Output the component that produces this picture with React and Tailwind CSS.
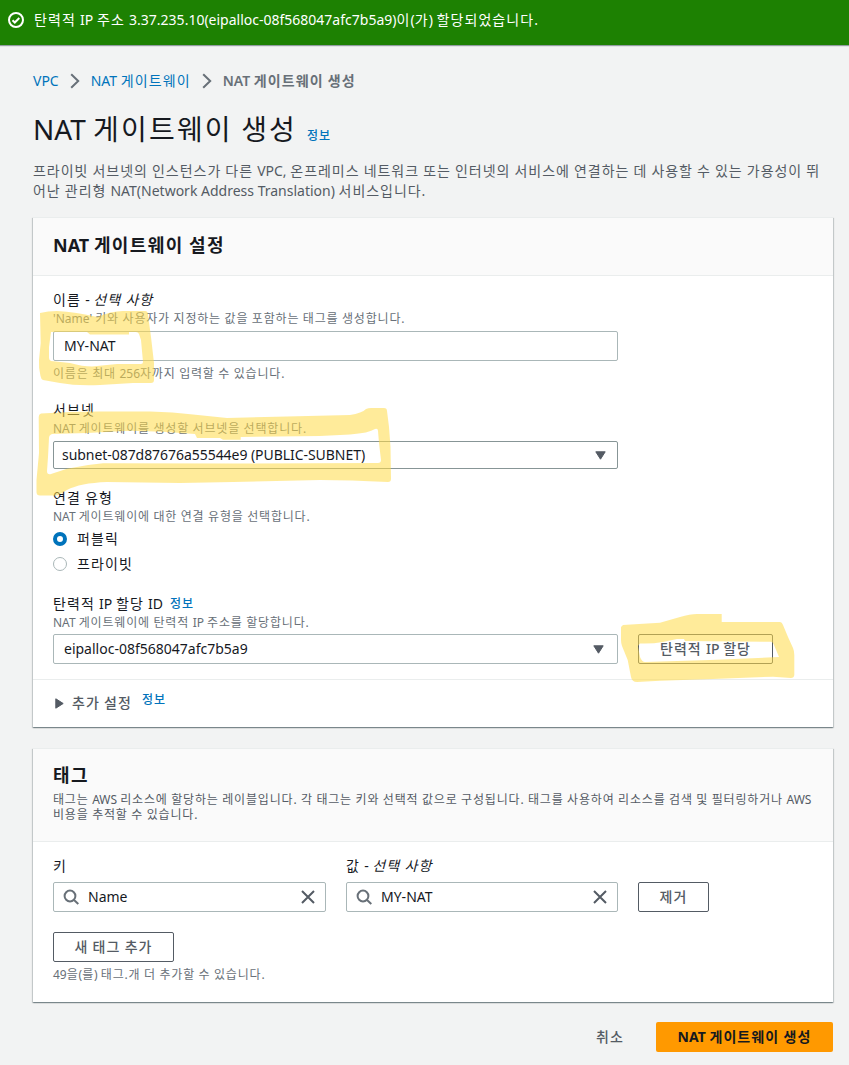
import React from "react";

const HANGUL = /([\uac00-\ud7a3]+(?:[ .,]+[\uac00-\ud7a3]*)*)/;

/* Hangul runs are set slightly wider than the Latin runs beside them. */
function T({ children, dense }) {
  const spacing = dense ? "tracking-[0.069em] [word-spacing:-0.035em]" : "tracking-[0.078em] [word-spacing:-0.04em]";
  return children.split(HANGUL).map((part, i) =>
    i % 2 ? (
      <span key={i} className={spacing}>{part}</span>
    ) : (
      <span key={i}>{part}</span>
    )
  );
}

function Chevron() {
  return (
    <svg className="mx-[11px] h-4 w-[10px] shrink-0" viewBox="0 0 10 16" fill="none" stroke="#687078" strokeWidth="2">
      <path d="M1.2 1.2 8.2 8l-7 6.8" />
    </svg>
  );
}

function Caret() {
  return (
    <svg className="h-[9px] w-[11px] shrink-0" viewBox="0 0 11 9">
      <path d="M.8.8h9.400L5.500 8.200z" fill="#545b64" stroke="#545b64" strokeLinejoin="round" />
    </svg>
  );
}

function Search() {
  return (
    <svg className="h-4 w-4 shrink-0" viewBox="0 0 16 16" fill="none" stroke="#687078" strokeWidth="2">
      <circle cx="7" cy="7" r="5.400" />
      <path d="m11 11 4.300 4" />
    </svg>
  );
}

function Close() {
  return (
    <svg className="h-[14px] w-[14px] shrink-0" viewBox="0 0 14 14" fill="none" stroke="#545b64" strokeWidth="2">
      <path d="m1 1 12 12M13 1 1 13" />
    </svg>
  );
}

function Info({ className = "" }) {
  return <a className={"text-[12px] font-medium text-[#0073bb] " + className}><T>정보</T></a>;
}

function Label({ children, optional }) {
  return (
    <div className="flex h-5 items-center whitespace-pre text-[14px] leading-5 text-[#16191f]">
      <span><T>{children}</T>{optional && <i><T>선택 사항</T></i>}</span>
    </div>
  );
}

function Hint({ children }) {
  return <p className="h-[17px] whitespace-nowrap pt-px text-[12px] leading-4 text-[#687078]"><T dense>{children}</T></p>;
}

function Button({ children, className = "" }) {
  return (
    <button className={"flex h-[30px] items-center justify-center rounded-[2px] border border-[#545b64] bg-white text-[14px] font-medium leading-5 text-[#545b64] " + className}>
      <span><T>{children}</T></span>
    </button>
  );
}

function TagField({ label, optional, value, className }) {
  return (
    <div className={className}>
      <Label optional={optional}>{label}</Label>
      <div className="mt-[6px] flex h-[30px] items-center rounded-[2px] border border-[#aab7b8] bg-white pl-[9px] pr-[10px]">
        <Search />
        <span className="ml-[9px] flex-1 text-[14px] leading-5 text-[#16191f]"><T>{value}</T></span>
        <Close />
      </div>
    </div>
  );
}

const CARD = "border-t border-t-[#eaeded] bg-white shadow-[0_1px_1px_0_rgba(0,28,36,0.3),1px_1px_1px_0_rgba(0,28,36,0.15),-1px_1px_1px_0_rgba(0,28,36,0.15)]";

function Highlights() {
  return (
    <svg className="pointer-events-none absolute left-0 top-0" width="849" height="1065" viewBox="0 0 849 1065" fill="#ffda47" fillOpacity="0.55" fillRule="evenodd">
      <path d="M40 313Q48 311 57 311Q76 312 97 317Q111 311 123 311H145Q148 311 148 315L151 337L154 363V380Q154 383 151 383H133L100 385Q84 385.500 73 384.700L60 383L43 380Q41 379 40.500 376Q38.500 367 39 360L40.700 343ZM51 332H87L90 334.500H129V332H136Q138 332 139 334L141 340L143 362Q143 364 141 364H117L92 366.500Q83 366.500 70 363L51 361Q49 360 49 358V347Z" />
      <path d="M41 413.500Q70 411.500 100 411.500H150Q173 412 193 414.500L227 418L287 416.500L350 415Q362 413 366 409Q369 407.500 373 408H384Q387 408 387 411L389 427L390.500 447L391 479Q391 482 388 482Q350 480 320 480L233 482L180 483L107 482Q80 483 67 490L60 494Q58 495.500 55 495.500H40Q36.500 495.500 36.500 492V480L39 453L38.700 417Q38.700 414 41 413.500ZM52 434L87 433L130 430.700Q163 431 195 434L197 438H220L223 439.700H240.700V437L320 436L350 434.500Q369 433 375 429Q378 428 378 431L379 443L381 460Q381 463 378 463L233 463.500L103 463.300Q84 465 67 468.700L51 474Q47 475 47 471L48 457L49 438Q49 435 52 434Z" />
      <path d="M623 625L639 624L660 622.700L680 617Q690 614 697 614H721.700V622H780Q782 622 783 625L788 637L793 648Q794.300 651 794.300 655V675Q794 678 791 678L773 676.700L713 679L660 680.700L637 682Q632 682 631 677L627.700 660L622 646Q621 643 621 640V627ZM640 643.500Q652 644 663 642L677 639H684L685 641L771 641.700Q773 642 774 645L779 657L740 658.700L710 660L645 662Q642 662 640 657L638 646Z" />
    </svg>
  );
}

export default function App() {
  return (
    <div className="relative h-[1065px] w-[849px] overflow-hidden bg-[#f2f3f3] font-['Noto_Sans','Noto_Sans_CJK_KR',sans-serif]">
      <header className="flex h-[45px] items-start bg-[#1d8102] pl-2 pt-[10px] text-white shadow-[0_1px_1px_rgba(0,28,36,0.4)]">
        <svg className="mt-[2px] h-4 w-4 shrink-0" viewBox="0 0 16 16" fill="none" stroke="currentColor" strokeWidth="2">
          <circle cx="8" cy="8" r="7" />
          <path d="m4.500 8.200 2.300 2.300 4.500-4.500" />
        </svg>
        <p className="ml-[10px] whitespace-nowrap text-[14px] leading-5"><T>탄력적 IP 주소 3.37.235.10(eipalloc-08f568047afc7b5a9)이(가) 할당되었습니다.</T></p>
      </header>

      <main className="pl-[33px] pr-4">
        <nav className="mt-[26px] flex h-5 items-center whitespace-nowrap text-[14px] leading-5 text-[#0073bb]">
          <a><T>VPC</T></a>
          <Chevron />
          <a><T>NAT 게이트웨이</T></a>
          <Chevron />
          <span className="font-semibold text-[#687078]"><T>NAT 게이트웨이 생성</T></span>
        </nav>

        <div className="mt-5 flex h-9 items-baseline whitespace-nowrap leading-9">
          <h1 className="text-[28px] text-[#16191f]"><T>NAT 게이트웨이 생성</T></h1>
          <Info className="ml-[10px]" />
        </div>
        <p className="mt-[14px] whitespace-nowrap text-[14px] leading-5 text-[#545b64]">
          <T dense>프라이빗 서브넷의 인스턴스가 다른 VPC, 온프레미스 네트워크 또는 인터넷의 서비스에 연결하는 데 사용할 수 있는 가용성이 뛰</T>
          <br />
          <T dense>어난 관리형 NAT(Network Address Translation) 서비스입니다.</T>
        </p>

        <section className={"mt-4 h-[510px] " + CARD}>
          <h2 className="flex h-[58px] items-center border-b border-[#eaeded] bg-[#fafafa] pb-[2px] pl-5 text-[18px] font-bold text-[#16191f]">
            <span><T>NAT 게이트웨이 설정</T></span>
          </h2>
          <div className="h-[404px] border-b border-[#eaeded] pl-5 pt-[14px]">
            <Label optional>이름 - </Label>
            <Hint>'Name' 키와 사용자가 지정하는 값을 포함하는 태그를 생성합니다.</Hint>
            <div className="mt-[4px] flex h-[30px] w-[565px] items-center rounded-[2px] border border-[#aab7b8] pl-[10px] text-[14px] leading-5 text-[#16191f]">
              <span><T>MY-NAT</T></span>
            </div>
            <div className="mt-[4px]"><Hint>이름은 최대 256자까지 입력할 수 있습니다.</Hint></div>

            <div className="mt-[18px]"><Label>서브넷</Label></div>
            <Hint>NAT 게이트웨이를 생성할 서브넷을 선택합니다.</Hint>
            <div className="mt-[4px] flex h-[28px] w-[565px] items-center justify-between rounded-[2px] border border-[#879596] pl-2 pr-[11px] text-[14px] leading-5 text-[#16191f]">
              <span className="tracking-[-0.05px]"><T>subnet-087d87676a55544e9 (PUBLIC-SUBNET)</T></span>
              <Caret />
            </div>

            <div className="mt-[19px]"><Label>연결 유형</Label></div>
            <Hint>NAT 게이트웨이에 대한 연결 유형을 선택합니다.</Hint>
            <div className="mt-px flex h-[25px] items-center gap-[10px] text-[14px] leading-5 text-[#16191f]">
              <span className="h-[14px] w-[14px] rounded-full border-4 border-[#0073bb] bg-white" />
              <span><T>퍼블릭</T></span>
            </div>
            <div className="flex h-[25px] items-center gap-[10px] text-[14px] leading-5 text-[#16191f]">
              <span className="h-[14px] w-[14px] rounded-full border border-[#aab7b8] bg-white" />
              <span><T>프라이빗</T></span>
            </div>

            <div className="mt-[18px] flex items-center gap-[7px]">
              <Label>탄력적 IP 할당 ID</Label>
              <Info />
            </div>
            <Hint>NAT 게이트웨이에 탄력적 IP 주소를 할당합니다.</Hint>
            <div className="mt-[3px] flex gap-5">
              <div className="flex h-[30px] w-[565px] items-center justify-between rounded-[2px] border border-[#aab7b8] pl-[10px] pr-[13px] text-[14px] leading-5 text-[#16191f]">
                <span><T>eipalloc-08f568047afc7b5a9</T></span>
                <Caret />
              </div>
              <Button className="w-[135px]">탄력적 IP 할당</Button>
            </div>
          </div>
          <div className="flex h-[46px] items-center pl-[22px]">
            <svg className="h-[11px] w-[9px]" viewBox="0 0 9 11"><path d="M.8.8v9.400L8.200 5.500z" fill="#545b64" stroke="#545b64" strokeLinejoin="round" /></svg>
            <span className="ml-2 text-[14px] font-medium leading-5 text-[#545b64]"><T>추가 설정</T></span>
            <Info className="-mt-[7px] ml-[10px]" />
          </div>
        </section>

        <section className={"mt-[21px] h-[254px] " + CARD}>
          <div className="h-[93px] border-b border-[#eaeded] bg-[#fafafa] pl-5 pt-[14px]">
            <h2 className="text-[18px] font-bold leading-6 text-[#16191f]"><T>태그</T></h2>
            <p className="mt-[5px] whitespace-nowrap text-[12px] leading-[15px] text-[#545b64]">
              <T dense>태그는 AWS 리소스에 할당하는 레이블입니다. 각 태그는 키와 선택적 값으로 구성됩니다. 태그를 사용하여 리소스를 검색 및 필터링하거나 AWS</T>
              <br />
              <T dense>비용을 추적할 수 있습니다.</T>
            </p>
          </div>
          <div className="pl-5 pt-[14px]">
            <div className="flex items-end">
              <TagField className="w-[273px]" label="키" value="Name" />
              <TagField className="ml-5 w-[272px]" label="값 - " optional value="MY-NAT" />
              <Button className="ml-5 w-[71px]">제거</Button>
            </div>
            <Button className="mt-5 w-[121px]">새 태그 추가</Button>
            <div className="mt-[4px]"><Hint>49을(를) 태그.개 더 추가할 수 있습니다.</Hint></div>
          </div>
        </section>

        <footer className="mt-5 flex items-center justify-end">
          <a className="mr-8 text-[14px] font-medium leading-5 text-[#545b64]"><T>취소</T></a>
          <button className="flex h-[30px] w-[177px] items-center justify-center rounded-[2px] bg-[#ff9900] text-[14px] font-bold leading-5 text-[#16191f]">
            <span><T>NAT 게이트웨이 생성</T></span>
          </button>
        </footer>
      </main>
      <Highlights />
    </div>
  );
}
